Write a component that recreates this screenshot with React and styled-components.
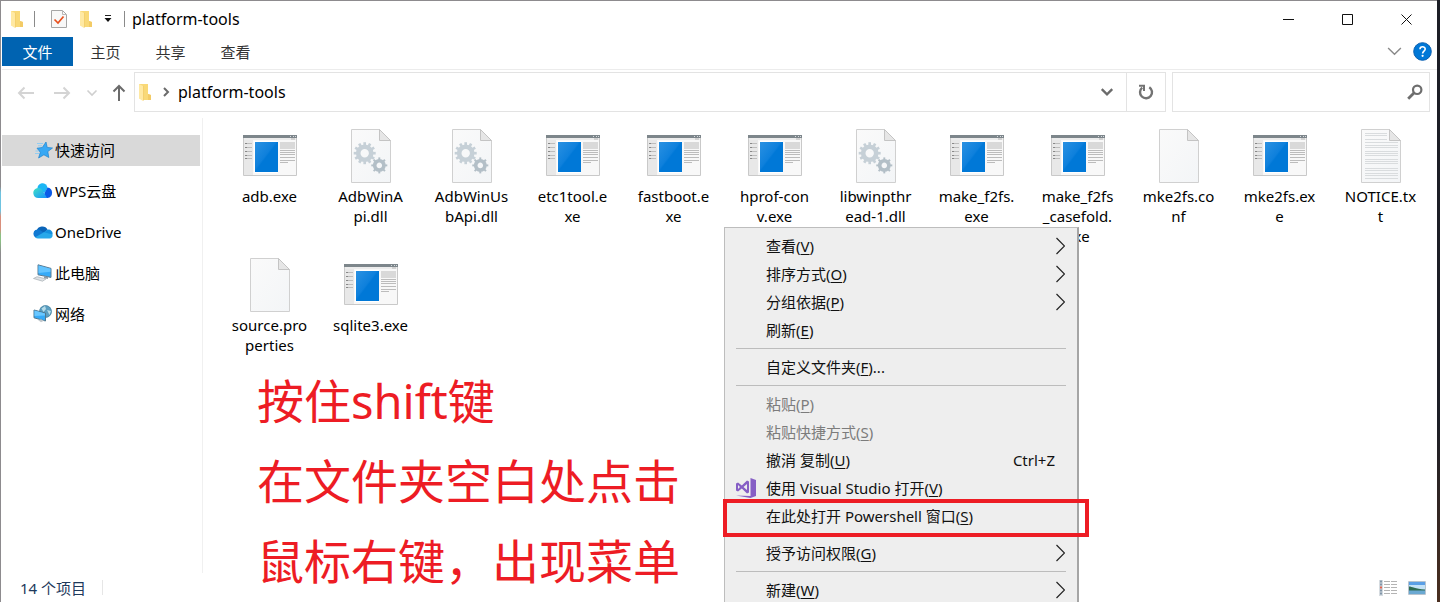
import React from 'react';
import styled, { createGlobalStyle } from 'styled-components';

const GlobalStyle = createGlobalStyle`
  * {
    box-sizing: border-box;
  }

  body {
    margin: 0;
    overflow: hidden;
    font-family: 'Noto Sans', 'Noto Sans CJK SC', sans-serif;
    font-size: 15px;
    line-height: 20px;
    color: #000;
  }

  button,
  input {
    font: inherit;
    color: inherit;
    background: none;
    border: 0;
    margin: 0;
    padding: 0;
  }

  svg {
    display: block;
    flex: none;
  }
`;

const Desktop = styled.div`
  height: 100vh;
  padding: 1px 3px 0 1px;
  background:
    linear-gradient(#1c1e26, #1c1e26 70%, #4a2f20) right / 3px 100% no-repeat,
    linear-gradient(#8d8b8e 31%, #6fc3e0 32% 35%, #d98f7c 36% 38%, #8cc084 39% 40%, #8d8b8e 42%);
`;

const Window = styled.div`
  height: 100%;
  display: flex;
  flex-direction: column;
  padding-left: 1px;
  background: #fff;
`;

/* ---------- title bar ---------- */

const TitleBar = styled.header`
  display: flex;
  align-items: center;
  height: 36px;
  padding: 0 1px 0 8px;
`;

const QuickButton = styled.button`
  display: flex;
  align-items: center;
  justify-content: center;
  width: ${props => props.$width || 27}px;
  height: 24px;
`;

const TitleDivider = styled.span`
  width: 1px;
  height: 16px;
  margin: 0 ${props => props.$gap || 7}px;
  background: #8a8a8a;
`;

const Title = styled.h1`
  flex: 1;
  margin: 0;
  font-size: 16px;
  font-weight: 400;
`;

const WindowButton = styled.button`
  display: flex;
  align-items: center;
  justify-content: center;
  width: 59px;
  height: 36px;
`;

/* ---------- ribbon ---------- */

const Ribbon = styled.nav`
  display: flex;
  align-items: center;
  height: 33px;
  padding-bottom: 3px;
  border-bottom: 1px solid #ececec;
`;

const RibbonTab = styled.button`
  width: ${props => (props.$file ? 71 : 65)}px;
  height: 29px;
  color: ${props => (props.$file ? '#fff' : '#333')};
  background: ${props => (props.$file ? '#0063b1' : 'transparent')};
`;

const RibbonTools = styled.div`
  display: flex;
  align-items: center;
  gap: 10px;
  margin-left: auto;
  padding-right: 5px;
`;

/* ---------- address row ---------- */

const AddressRow = styled.div`
  display: flex;
  align-items: center;
  padding: 2px 7px 6px 6px;
`;

const NavButton = styled.button`
  display: flex;
  align-items: center;
  justify-content: center;
  width: ${props => (props.$small ? 24 : 36)}px;
  height: 40px;
  padding-top: 2px;
`;

const UpButton = styled(NavButton)`
  width: 30px;
`;

const AddressBar = styled.div`
  flex: 1;
  display: flex;
  align-items: center;
  height: 40px;
  padding-left: 4px;
  border: 1px solid #e3e3e3;
`;

const Crumb = styled.button`
  display: flex;
  align-items: center;
  gap: 6px;
  margin-right: auto;
  padding-left: 9px;
  font-size: 16px;
`;

const AddressButton = styled.button`
  display: flex;
  align-items: center;
  justify-content: center;
  width: 39px;
  height: 38px;
  border-left: ${props => (props.$divided ? '1px solid #e3e3e3' : '0')};
`;

const SearchBox = styled.label`
  display: flex;
  align-items: center;
  flex: 0 0 258px;
  height: 40px;
  margin-left: 6px;
  padding-right: 6px;
  border: 1px solid #e3e3e3;

  input {
    flex: 1;
    min-width: 0;
    height: 100%;
    padding-left: 8px;
    outline: 0;
  }
`;

/* ---------- body ---------- */

const Body = styled.main`
  flex: 1;
  display: flex;
  min-height: 0;
`;

const Sidebar = styled.aside`
  width: 201px;
  padding: 17px 2px 0 0;
  border-right: 1px solid #f0f0f0;
`;

const PlaceList = styled.ul`
  display: flex;
  flex-direction: column;
  gap: 10px;
  margin: 0;
  padding: 0;
  list-style: none;
`;

const Place = styled.a`
  display: flex;
  align-items: center;
  gap: 2px;
  height: 31px;
  padding: 0 0 1px 31px;
  color: inherit;
  text-decoration: none;
  background: ${props => (props.$active ? '#d9d9d9' : 'transparent')};
`;

const FilePane = styled.section`
  position: relative;
  flex: 1;
  min-width: 0;
`;

const FileGrid = styled.ul`
  display: grid;
  grid-template-columns: repeat(auto-fill, 101px);
  grid-auto-rows: 129px;
  margin: 0;
  padding: 11px 0 0 16px;
  list-style: none;
`;

const File = styled.li`
  display: flex;
  flex-direction: column;
  align-items: center;
  gap: 3px;
  text-align: center;
  white-space: pre;
`;

const Note = styled.p`
  position: absolute;
  left: 54px;
  top: 243px;
  z-index: 1;
  margin: 0;
  font-size: 47px;
  line-height: 80px;
  color: #ed1c24;
  white-space: pre;
`;

/* ---------- context menu ---------- */

const Menu = styled.div`
  position: absolute;
  left: 521px;
  top: 109px;
  z-index: 2;
  width: 355px;
  padding: 4px 0;
  background: #eee;
  border: 1px solid #bdbdbd;
  border-right: 2px solid #a5a5a5;
`;

const MenuItem = styled.button`
  position: relative;
  display: flex;
  align-items: center;
  width: 100%;
  height: 28px;
  padding-right: 12px;
  text-align: left;
  color: ${props => (props.$disabled ? '#7c7c7c' : '#111')};

  u {
    text-decoration-thickness: 1px;
    text-underline-offset: 2px;
  }
`;

const MenuIcon = styled.span`
  display: flex;
  justify-content: center;
  width: 41px;
`;

const Shortcut = styled.span`
  margin-left: auto;
  padding-right: 10px;
`;

const MenuArrow = styled.svg`
  margin-left: auto;
`;

const Separator = styled.hr`
  height: 1px;
  margin: 4px 11px;
  border: 0;
  background: #bcbcbc;
`;

const Highlight = styled.span`
  position: absolute;
  left: -2px;
  right: -12px;
  top: -3px;
  height: 38px;
  border: 4px solid #ed1c24;
`;

/* ---------- status bar ---------- */

const StatusBar = styled.footer`
  display: flex;
  align-items: center;
  height: 29px;
  padding: 0 11px 0 18px;
  color: #1e395b;
`;

const StatusDivider = styled.span`
  width: 1px;
  height: 15px;
  margin-left: 16px;
  background: #e6e6e6;
`;

const ViewButtons = styled.div`
  display: flex;
  align-items: center;
  gap: 11px;
  margin-left: auto;
`;

/* ---------- icons ---------- */

const FolderIcon = () => (
  <svg width="12" height="18" viewBox="0 0 12 18">
    <path d="M0 1h9v10l3 1v5H4L0 15z" fill="#f9d978" />
    <path d="M0 1l4 2v15L0 15.500z" fill="#ffe9a3" />
    <path d="M4 3l.5-.3V17.700L4 18z" fill="#efc766" />
    <path d="M9 11l3 1v5H9z" fill="#f3cb66" />
  </svg>
);

const PropertiesIcon = () => (
  <svg width="16" height="20" viewBox="0 0 16 20">
    <path d="M.5 1.500h11l4 4v13H.5z" fill="#f8f8f8" stroke="#a6a6a6" />
    <path d="M11.500 1.500v4h4" fill="none" stroke="#b8b8b8" />
    <path d="M3.500 10.500l3.500 3.500 5.500-6.500" fill="none" stroke="#e8501e" strokeWidth="1.700" />
  </svg>
);

const Chevron = ({ size = 12, color = '#6b6b6b', width = 2, right }) => (
  <svg width={size} height={size} viewBox="0 0 12 12">
    <path
      d={right ? 'M4 2l4 4-4 4' : 'M1.500 3.500L6 8l4.500-4.500'}
      fill="none"
      stroke={color}
      strokeWidth={width}
    />
  </svg>
);

const ArrowIcon = ({ color, rotate = 0 }) => (
  <svg width="18" height="18" viewBox="0 0 18 18">
    <path
      d="M17 9H2M7.500 3.500L2 9l5.500 5.500"
      fill="none"
      stroke={color}
      strokeWidth="2"
      transform={`rotate(${rotate} 9 9)`}
    />
  </svg>
);

const RefreshIcon = () => (
  <svg width="16" height="16" viewBox="0 0 16 16">
    <path d="M4.200 3.600A6 6 0 1 0 11.300 3.200" fill="none" stroke="#737373" strokeWidth="2.400" />
    <path d="M1 1.700h5V7" fill="none" stroke="#737373" strokeWidth="2" />
  </svg>
);

const SearchIcon = () => (
  <svg width="16" height="16" viewBox="0 0 16 16">
    <circle cx="10.200" cy="5.800" r="4.200" fill="none" stroke="#6e6e6e" strokeWidth="2.200" />
    <path d="M7.200 8.800L1.200 14.800" stroke="#6e6e6e" strokeWidth="2.800" />
  </svg>
);

const HelpIcon = () => (
  <svg width="19" height="19" viewBox="0 0 19 19">
    <circle cx="9.500" cy="9.500" r="8.800" fill="#0078d7" stroke="#0a5fb0" />
    <path d="M7 7.200c0-3.200 5.200-3.200 5.200-.2 0 2-2.600 2.200-2.600 4.500" fill="none" stroke="#fff" strokeWidth="1.600" />
    <circle cx="9.600" cy="13.800" r="1.100" fill="#fff" />
  </svg>
);

const StarIcon = () => (
  <svg width="20" height="18" viewBox="0 0 20 18">
    <path d="M13 1l1.200 5.400 5.300.6-4.700 3.600 1 5.900-4.900-2.700L5.600 17l1.700-5.700L4 7.200l5.300-.7z" fill="#38a8f4" stroke="#1b83cf" strokeWidth=".7" />
    <path d="M4 2.500h6M5 4.800h4M2.500 10h3M2 12.500h4" stroke="#8accf5" strokeWidth=".9" />
  </svg>
);

const WpsCloudIcon = () => (
  <svg width="20" height="16" viewBox="0 0 20 16">
    <defs>
      <linearGradient id="wps" x1="0" y1="0" x2="1" y2="1">
        <stop offset="0" stopColor="#3fe0c5" />
        <stop offset="1" stopColor="#1690ff" />
      </linearGradient>
    </defs>
    <path d="M4.500 6a5 5 0 0 1 10-1.500L12 10z" fill="#1cb6f5" />
    <path d="M9 15l5.500-10.500a5.300 5.300 0 0 1 0 10.500z" fill="#0a5ae8" />
    <path d="M5.500 15a5 5 0 1 1 4.300-7.300L14 15z" fill="url(#wps)" />
  </svg>
);

const OneDriveIcon = () => (
  <svg width="20" height="14" viewBox="0 0 20 14">
    <path d="M3.500 6A6 6 0 0 1 14.600 4.800L10 9z" fill="#0a64b8" />
    <path d="M5 13a4.300 4.300 0 1 1 1-8.400l6 4z" fill="#1179d2" />
    <path d="M10 7.800l4.500-3a4 4 0 0 1 5 4.700L17 11z" fill="#1490df" />
    <path d="M2.200 12.300L11 7.200l8.400 2.300A3 3 0 0 1 16.500 13.500H5a4 4 0 0 1-2.800-1.200z" fill="#28a8ea" />
  </svg>
);

const ComputerIcon = () => (
  <svg width="20" height="18" viewBox="0 0 20 18">
    <path d="M5 .8l13 3.600v9L5 10.800z" fill="#35aaf8" stroke="#5d7c92" />
    <path d="M5.500 1.500l12 3.300v3L5.500 9z" fill="#63c4ff" />
    <path d="M11 12.200v2l4 .8v-2z" fill="#8f9ba4" />
    <path d="M.5 14.500L4 12.700l9 2.200-3.500 2.300z" fill="#dde1e4" stroke="#a6adb3" strokeWidth=".7" />
  </svg>
);

const NetworkIcon = () => (
  <svg width="20" height="18" viewBox="0 0 20 18">
    <circle cx="12.500" cy="6.500" r="6" fill="#5b9fc2" stroke="#3a7898" strokeWidth=".7" />
    <path d="M8.500 3.500L12 1l1 3-2.500 3zM14 5l4 1-1.500 4z" fill="#b5dbe8" />
    <path d="M1 5l11.500 3v8L1 12.800z" fill="#35aaf8" stroke="#4f7890" />
    <path d="M1.500 5.600L12 8.500v2L1.500 11z" fill="#69c7ff" />
    <path d="M5 15l3-.8 3 1.600-3 1.400z" fill="#c2c8cc" />
  </svg>
);

const ExeIcon = () => (
  <svg width="54" height="54" viewBox="0 0 54 54">
    <defs>
      <linearGradient id="exe" x1="0" y1="0" x2="1" y2="1">
        <stop offset="0" stopColor="#2a91e2" />
        <stop offset=".45" stopColor="#0e80dc" />
        <stop offset=".5" stopColor="#0078d7" />
      </linearGradient>
    </defs>
    <path d="M.5 6.500h53v40H.5z" fill="#f8f8f8" stroke="#c9c9c9" />
    <path d="M1 10h9v36H1z" fill="#e8e8e8" />
    <path d="M0 6h54v3H0z" fill="#7d868b" />
    <path d="M47 7.500h1m2 0h1m1 0h1" stroke="#d8dcdf" />
    <path d="M1 9h52v2H1z" fill="#ececec" />
    <path d="M48 10h4" stroke="#b4b4b4" />
    <path d="M4 14.500h5M4 18.500h5M4 22.500h5M4 26.500h5M4 29.500h5" stroke="#bdbdbd" />
    <path d="M2 14.500h2M2 18.500h2M2 22.500h2M2 26.500h2M2 29.500h2" stroke="#888" />
    <path d="M11 12h24v32H11z" fill="#fff" />
    <path d="M12 13h23v30H12z" fill="url(#exe)" />
    <path d="M37 13h15v7H37z" fill="#d9d9d9" />
    <path d="M37 21.500h15M37 23.500h15M37 25.500h15M37 28.500h15M37 31.500h15M37 33.500h8" stroke="#bcbcbc" />
  </svg>
);

const TEETH = [0, 30, 60, 90, 120, 150, 180, 210, 240, 270, 300, 330];
const SMALL_TEETH = [0, 45, 90, 135, 180, 225, 270, 315];

const Gear = ({ cx, cy, r, hole, color, teeth = TEETH }) => (
  <g transform={`translate(${cx} ${cy})`}>
    {teeth.map(angle => (
      <rect
        key={angle}
        x={-r * 0.15}
        y={-r * 1.25}
        width={r * 0.3}
        height={r * 0.5}
        fill={color}
        transform={`rotate(${angle})`}
      />
    ))}
    <circle r={(r + hole) / 2} fill="none" stroke={color} strokeWidth={r - hole} />
  </g>
);

const PageIcon = ({ kind }) => (
  <svg width="40" height="54" viewBox="0 0 40 54">
    <defs>
      <linearGradient id="page" x1="0" y1="0" x2="1" y2="1">
        <stop offset="0" stopColor="#fafafa" />
        <stop offset="1" stopColor="#f3f5f7" />
      </linearGradient>
    </defs>
    <path d="M.5.5h28l11 11v42H.5z" fill="url(#page)" stroke="#d0d0d0" />
    <path d="M28.500.5v11h11z" fill="#e6e6e6" stroke="#c4c4c4" />
    {kind === 'dll' && (
      <>
        <Gear cx={13.7} cy={24.2} r={8.8} hole={4.2} color="#c6d0d7" />
        <Gear cx={28.3} cy={36.4} r={6.4} hole={2.8} color="#b3bfc7" teeth={SMALL_TEETH} />
      </>
    )}
    {kind === 'txt' && (
      <path
        d="M4 4.500h22M4 6.500h22M4 10.500h22M4 13.500h33M4 16.500h33M4 18.500h33M4 22.500h33M4 24.500h33M4 26.500h33M4 30.500h33M4 32.500h33M4 34.500h33M4 39.500h33M4 41.500h33M4 44.500h33M4 46.500h33M4 49.500h33"
        stroke="#d9dcde"
      />
    )}
  </svg>
);

const VisualStudioIcon = () => (
  <svg width="20" height="20" viewBox="0 0 20 20">
    <path d="M14.500 0L20 2v16l-5.500 2L0 17.500l14.500.5z" fill="#865fc5" />
    <path d="M0 5.500L2 4.500l3.800 3L11 2.500l2 1v11l-2 1-5.200-5L2 13.500l-2-1zM2 7v4l2-2zM7.500 9L11 12V6z" fill="#865fc5" fillRule="evenodd" />
  </svg>
);

const DetailsViewIcon = () => (
  <svg width="18" height="16" viewBox="0 0 18 16">
    <path d="M0 0h4v16H0z" fill="#d5dbe0" />
    <path d="M1 1.500h2M1 4.500h2M1 10.500h2M1 13.500h2" stroke="#8095a8" strokeWidth="2" />
    <path d="M1 7.500h2" stroke="#e0604c" strokeWidth="2" />
    <path d="M5 1.500h6M12 1.500h6M5 4.500h6M12 4.500h6M5 7.500h6M12 7.500h6M5 10.500h6M12 10.500h6M5 13.500h6M12 13.500h6" stroke="#b4b4b4" />
  </svg>
);

const LargeViewIcon = () => (
  <svg width="18" height="14" viewBox="0 0 18 14">
    <path d="M.5.5h17v13H.5z" fill="#fff" stroke="#b8c4cf" />
    <path d="M1 1h16v12H1z" fill="#c4e2f7" />
    <path d="M1 1h16v3H1z" fill="#5b9fe6" />
    <path d="M1 5.500c3 0 6 2.500 16 3V10H1z" fill="#2f6b52" />
    <path d="M1 9.500h16V13H1z" fill="#6ba9d2" />
  </svg>
);

/* ---------- data ---------- */

const places = [
  { label: '快速访问', icon: <StarIcon />, active: true },
  { label: 'WPS云盘', icon: <WpsCloudIcon /> },
  { label: 'OneDrive', icon: <OneDriveIcon /> },
  { label: '此电脑', icon: <ComputerIcon /> },
  { label: '网络', icon: <NetworkIcon /> },
];

// names carry their own line breaks, as the icon view wraps them mid-word
const files = [
  { name: 'adb.exe', kind: 'exe' },
  { name: 'AdbWinA\npi.dll', kind: 'dll' },
  { name: 'AdbWinUs\nbApi.dll', kind: 'dll' },
  { name: 'etc1tool.e\nxe', kind: 'exe' },
  { name: 'fastboot.e\nxe', kind: 'exe' },
  { name: 'hprof-con\nv.exe', kind: 'exe' },
  { name: 'libwinpthr\nead-1.dll', kind: 'dll' },
  { name: 'make_f2fs.\nexe', kind: 'exe' },
  { name: 'make_f2fs\n_casefold.\nexe', kind: 'exe' },
  { name: 'mke2fs.co\nnf', kind: 'page' },
  { name: 'mke2fs.ex\ne', kind: 'exe' },
  { name: 'NOTICE.tx\nt', kind: 'txt' },
  { name: 'source.pro\nperties', kind: 'page' },
  { name: 'sqlite3.exe', kind: 'exe' },
];

const menu = [
  { label: '查看', hotkey: 'V', submenu: true },
  { label: '排序方式', hotkey: 'O', submenu: true },
  { label: '分组依据', hotkey: 'P', submenu: true },
  { label: '刷新', hotkey: 'E' },
  null,
  { label: '自定义文件夹', hotkey: 'F', suffix: '...' },
  null,
  { label: '粘贴', hotkey: 'P', disabled: true },
  { label: '粘贴快捷方式', hotkey: 'S', disabled: true },
  { label: '撤消 复制', hotkey: 'U', shortcut: 'Ctrl+Z' },
  { label: '使用 Visual Studio 打开', hotkey: 'V', icon: <VisualStudioIcon /> },
  { label: '在此处打开 Powershell 窗口', hotkey: 'S', highlight: true },
  null,
  { label: '授予访问权限', hotkey: 'G', submenu: true },
  null,
  { label: '新建', hotkey: 'W', submenu: true },
];

const ContextMenu = () => (
  <Menu role="menu">
    {menu.map((item, index) =>
      item ? (
        <MenuItem key={index} role="menuitem" $disabled={item.disabled} disabled={item.disabled}>
          <MenuIcon>{item.icon}</MenuIcon>
          <span>
            {item.label}(<u>{item.hotkey}</u>){item.suffix}
          </span>
          {item.shortcut && <Shortcut>{item.shortcut}</Shortcut>}
          {item.submenu && (
            <MenuArrow width="9" height="18" viewBox="0 0 9 18">
              <path d="M.5 1L8.500 9l-8 8" fill="none" stroke="#222" strokeWidth="1.200" />
            </MenuArrow>
          )}
          {item.highlight && <Highlight />}
        </MenuItem>
      ) : (
        <Separator key={index} />
      )
    )}
  </Menu>
);

export default function App() {
  return (
    <Desktop>
      <GlobalStyle />
      <Window>
        <TitleBar>
          <QuickButton $width={14} aria-label="窗口"><FolderIcon /></QuickButton>
          <TitleDivider $gap={10} />
          <QuickButton aria-label="属性"><PropertiesIcon /></QuickButton>
          <QuickButton aria-label="新建文件夹"><FolderIcon /></QuickButton>
          <QuickButton $width={18} aria-label="自定义快速访问工具栏">
            <svg width="8" height="8" viewBox="0 0 8 8">
              <path d="M1 .5h6" stroke="#222" />
              <path d="M.5 3h7L4 7z" fill="#111" />
            </svg>
          </QuickButton>
          <TitleDivider />
          <Title>platform-tools</Title>
          <WindowButton aria-label="最小化">
            <svg width="11" height="11" viewBox="0 0 11 11"><path d="M0 5.500h11" stroke="#111" /></svg>
          </WindowButton>
          <WindowButton aria-label="最大化">
            <svg width="11" height="11" viewBox="0 0 11 11"><path d="M.5.5h10v10H.5z" fill="none" stroke="#111" /></svg>
          </WindowButton>
          <WindowButton aria-label="关闭">
            <svg width="11" height="11" viewBox="0 0 11 11"><path d="M.5.5l10 10M10.500.5l-10 10" stroke="#111" /></svg>
          </WindowButton>
        </TitleBar>

        <Ribbon>
          <RibbonTab $file>文件</RibbonTab>
          <RibbonTab>主页</RibbonTab>
          <RibbonTab>共享</RibbonTab>
          <RibbonTab>查看</RibbonTab>
          <RibbonTools>
            <button aria-label="展开功能区"><Chevron size={17} color="#8a8a8a" width={1} /></button>
            <button aria-label="帮助"><HelpIcon /></button>
          </RibbonTools>
        </Ribbon>

        <AddressRow>
          <NavButton aria-label="后退"><ArrowIcon color="#d4d4d4" /></NavButton>
          <NavButton aria-label="前进"><ArrowIcon color="#d4d4d4" rotate={180} /></NavButton>
          <NavButton $small aria-label="最近位置"><Chevron color="#cfcfcf" width={1.6} /></NavButton>
          <UpButton aria-label="上移"><ArrowIcon color="#6b6b6b" rotate={90} /></UpButton>
          <AddressBar>
            <FolderIcon />
            <Crumb>
              <Chevron right />
              platform-tools
            </Crumb>
            <AddressButton aria-label="以前的位置"><Chevron size={14} /></AddressButton>
            <AddressButton $divided aria-label="刷新"><RefreshIcon /></AddressButton>
          </AddressBar>
          <SearchBox>
            <input type="text" aria-label="搜索" />
            <SearchIcon />
          </SearchBox>
        </AddressRow>

        <Body>
          <Sidebar>
            <PlaceList>
              {places.map(place => (
                <li key={place.label}>
                  <Place href="#" $active={place.active}>
                    {place.icon}
                    {place.label}
                  </Place>
                </li>
              ))}
            </PlaceList>
          </Sidebar>
          <FilePane>
            <FileGrid>
              {files.map(file => (
                <File key={file.name}>
                  {file.kind === 'exe' ? <ExeIcon /> : <PageIcon kind={file.kind} />}
                  {file.name}
                </File>
              ))}
            </FileGrid>
            <Note>{'按住shift键\n在文件夹空白处点击\n鼠标右键，出现菜单'}</Note>
            <ContextMenu />
          </FilePane>
        </Body>

        <StatusBar>
          14 个项目
          <StatusDivider />
          <ViewButtons>
            <button aria-label="详细信息"><DetailsViewIcon /></button>
            <button aria-label="大图标"><LargeViewIcon /></button>
          </ViewButtons>
        </StatusBar>
      </Window>
    </Desktop>
  );
}
